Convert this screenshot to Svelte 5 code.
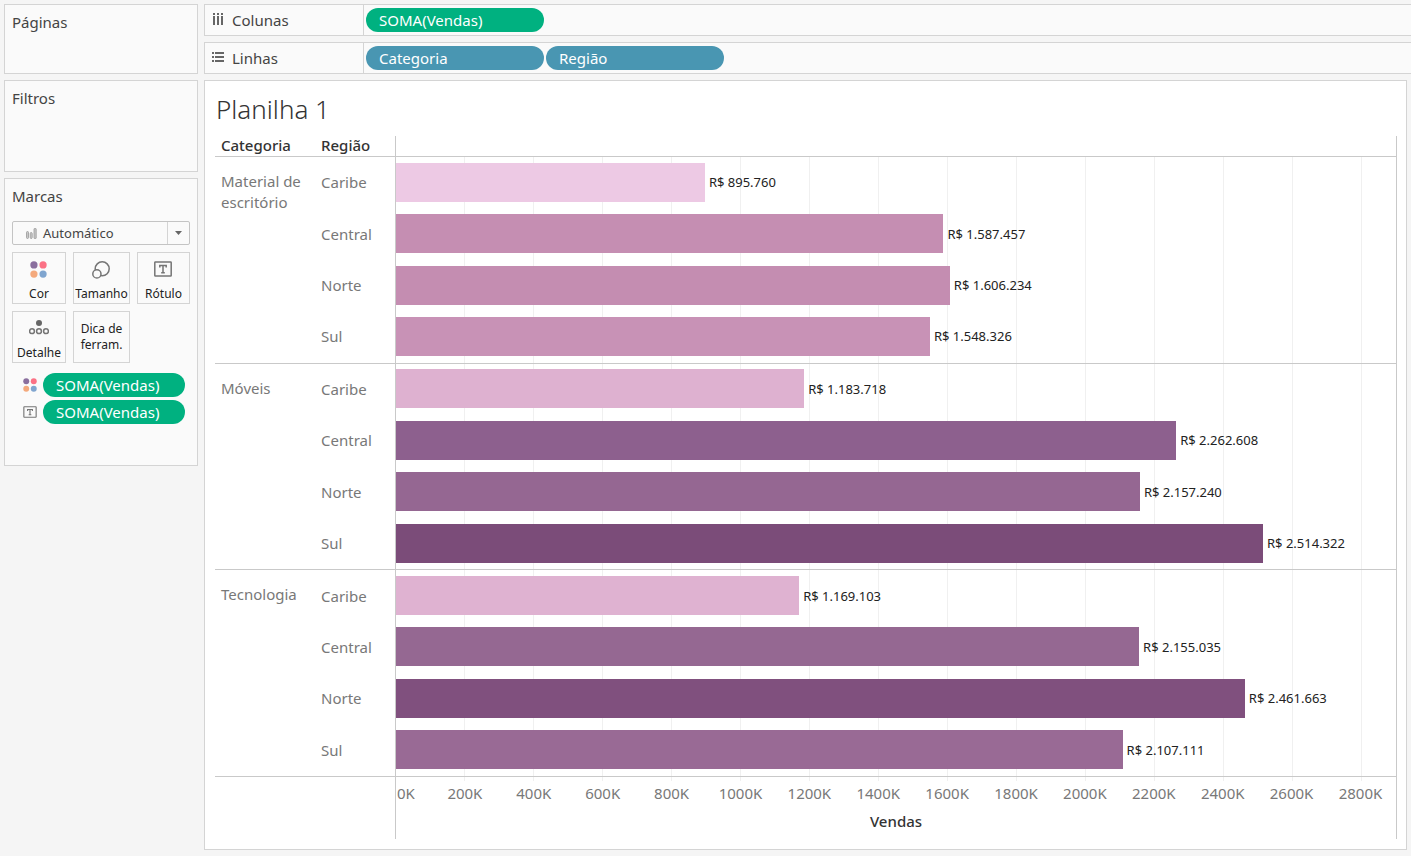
<script>
  const groups = [
    {
      name: 'Material de escritório',
      rows: [
        { region: 'Caribe', value: 895760, color: '#edc9e4' },
        { region: 'Central', value: 1587457, color: '#c58eb2' },
        { region: 'Norte', value: 1606234, color: '#c48db1' },
        { region: 'Sul', value: 1548326, color: '#c892b6' }
      ]
    },
    {
      name: 'Móveis',
      rows: [
        { region: 'Caribe', value: 1183718, color: '#deb1d0' },
        { region: 'Central', value: 2262608, color: '#8d608e' },
        { region: 'Norte', value: 2157240, color: '#956792' },
        { region: 'Sul', value: 2514322, color: '#7b4c79' }
      ]
    },
    {
      name: 'Tecnologia',
      rows: [
        { region: 'Caribe', value: 1169103, color: '#dfb2d1' },
        { region: 'Central', value: 2155035, color: '#956892' },
        { region: 'Norte', value: 2461663, color: '#80507e' },
        { region: 'Sul', value: 2107111, color: '#996a95' }
      ]
    }
  ];
  const max = 2900000;
  const ticks = Array.from({ length: 14 }, (_, i) => (i + 1) * 200);
  const money = (n) => 'R$ ' + String(n).replace(/\B(?=(\d{3})+$)/g, '.');
</script>

{#snippet dots(size)}
  <svg width={size} height={size} viewBox="0 0 16 16" aria-hidden="true">
    <circle cx="3.7" cy="3.7" r="3.4" fill="#8a6f9e" />
    <circle cx="12.3" cy="3.7" r="3.4" fill="#fb7185" />
    <circle cx="3.7" cy="12.3" r="3.4" fill="#f4a97c" />
    <circle cx="12.3" cy="12.3" r="3.4" fill="#80a5cf" />
  </svg>
{/snippet}

{#snippet label(w, h)}
  <svg width={w} height={h} viewBox="0 0 18 16" aria-hidden="true" fill="none" stroke="#757575">
    <rect x="0.8" y="1" width="16.4" height="14" rx="0.6" stroke-width="1.5" />
    <path d="M5.8 6.6V4.6h6.4v2M9 4.6v7M7.2 11.7h3.6" stroke-width="1.5" />
  </svg>
{/snippet}

<div class="app">
  <aside>
    <section class="panel pages"><h2>Páginas</h2></section>
    <section class="panel filters"><h2>Filtros</h2></section>
    <section class="panel marks">
      <h2>Marcas</h2>
      <button class="type" aria-haspopup="listbox">
        <svg width="11" height="11" viewBox="0 0 11 11" aria-hidden="true" fill="#c8c8c8" stroke="#999" stroke-width="0.8">
          <rect x="0.5" y="3.5" width="2" height="7" rx="1" />
          <rect x="4.2" y="4.5" width="2" height="6" rx="1" />
          <rect x="8" y="0.5" width="2.2" height="10" rx="0.6" />
        </svg>
        <span>Automático</span>
        <i><svg width="7" height="4" viewBox="0 0 7 4" aria-hidden="true"><path d="M0 0h7L3.5 4z" fill="#666" /></svg></i>
      </button>
      <div class="cards">
        <button>{@render dots(17)}<span>Cor</span></button>
        <button>
          <svg width="18" height="18" viewBox="0 0 18 18" aria-hidden="true" stroke="#757575" stroke-width="1.5">
            <circle cx="10.2" cy="7.8" r="7" fill="none" />
            <circle cx="4.9" cy="12.9" r="4.1" fill="#fafafa" />
          </svg>
          <span>Tamanho</span>
        </button>
        <button>{@render label(18, 16)}<span>Rótulo</span></button>
        <button>
          <svg width="20" height="15" viewBox="0 0 20 15" aria-hidden="true" fill="none" stroke="#757575" stroke-width="1.5">
            <circle cx="10" cy="3.1" r="3" fill="#666" stroke="none" />
            <circle cx="3" cy="11.2" r="2.4" />
            <circle cx="10" cy="11.2" r="2.4" />
            <circle cx="17" cy="11.2" r="2.4" />
          </svg>
          <span>Detalhe</span>
        </button>
        <button class="tip">Dica de<br />ferram.</button>
      </div>
      <div class="encodings">
        <div>{@render dots(14)}<button class="pill green">SOMA(Vendas)</button></div>
        <div>{@render label(14, 12)}<button class="pill green">SOMA(Vendas)</button></div>
      </div>
    </section>
  </aside>

  <main>
    <section class="shelf">
      <h2>
        <svg width="12" height="14" viewBox="0 0 12 14" aria-hidden="true" fill="#666">
          <path d="M1 0h2v2H1zM5 0h2v2H5zM9 0h2v2H9zM1 3h2v9H1zM5 3h2v9H5zM9 3h2v9H9z" />
        </svg>
        Colunas
      </h2>
      <button class="pill green">SOMA(Vendas)</button>
    </section>
    <section class="shelf">
      <h2>
        <svg width="12" height="14" viewBox="0 0 12 14" aria-hidden="true" fill="#666">
          <path d="M0 1h2v2H0zM0 5h2v2H0zM0 9h2v2H0zM3 1h9v2H3zM3 5h9v2H3zM3 9h9v2H3z" />
        </svg>
        Linhas
      </h2>
      <button class="pill blue">Categoria</button>
      <button class="pill blue">Região</button>
    </section>

    <section class="sheet">
      <h1>Planilha 1</h1>
      <div class="viz">
        <div class="head names"><b>Categoria</b><b>Região</b></div>
        <div class="head plot"></div>
        <div class="body">
          <div class="grid" aria-hidden="true">
            {#each ticks as t (t)}<i></i>{/each}
            <i class="half"></i>
          </div>
          <div class="groups">
            {#each groups as g (g.name)}
              <div class="group">
                <div class="cat">{g.name}</div>
                <div class="rows">
                  {#each g.rows as r (r.region)}
                    <div class="row">
                      <span class="region">{r.region}</span>
                      <div class="track">
                        <div class="bar" style="width: {(r.value / max) * 100}%; background: {r.color}"></div>
                        <span class="value">{money(r.value)}</span>
                      </div>
                    </div>
                  {/each}
                </div>
              </div>
            {/each}
          </div>
        </div>
        <div class="foot"></div>
        <div class="foot plot">
          <div class="ticks">
            <span class="zero">0K</span>
            {#each ticks as t (t)}<span>{t}K</span>{/each}
          </div>
          <b>Vendas</b>
        </div>
      </div>
    </section>
  </main>
</div>

<style>
  :global(body) {
    background: #f5f5f5;
  }
  .app {
    box-sizing: border-box;
    min-height: 100vh;
    display: grid;
    grid-template-columns: 194px minmax(0, 1fr);
    gap: 6px;
    padding: 4px 0 6px 4px;
    font: 15px/20px 'Noto Sans', sans-serif;
    color: #444;
  }
  .app * {
    box-sizing: border-box;
  }
  h1,
  h2 {
    margin: 0;
    font-weight: 400;
  }
  h2 {
    font-size: 15px;
    line-height: 20px;
  }
  button {
    font: inherit;
    color: inherit;
    padding: 0;
    margin: 0;
    cursor: pointer;
  }
  svg {
    display: block;
    flex: none;
  }
  aside,
  main {
    display: flex;
    flex-direction: column;
    gap: 6px;
    min-width: 0;
  }
  .panel {
    border: 1px solid #d4d4d4;
    background: #fafafa;
    padding: 7px;
  }
  .pages {
    min-height: 70px;
  }
  .filters {
    min-height: 92px;
  }
  .marks {
    min-height: 288px;
  }
  .type {
    display: flex;
    align-items: center;
    width: 100%;
    height: 24px;
    margin-top: 15px;
    border: 1px solid #c4c4c4;
    border-radius: 2px;
    background: #fafafa;
    padding-left: 13px;
    gap: 6px;
    font-size: 13px;
  }
  .type i {
    display: flex;
    align-items: center;
    justify-content: center;
    width: 22px;
    height: 100%;
    margin-left: auto;
    border-left: 1px solid #d4d4d4;
  }
  .cards {
    display: grid;
    grid-template-columns: 54fr 57fr 53fr;
    gap: 7px;
    margin-top: 7px;
  }
  .cards button {
    display: flex;
    flex-direction: column;
    align-items: center;
    justify-content: space-between;
    height: 52px;
    padding: 8px 0 1px;
    border: 1px solid #d4d4d4;
    background: #fafafa;
    font-size: 12px;
    line-height: 16px;
    color: #222;
  }
  .cards svg {
    margin-right: 1px;
  }
  .cards .tip {
    display: block;
    padding: 0;
  }
  .encodings {
    display: flex;
    flex-direction: column;
    gap: 3px;
    margin-top: 10px;
    padding: 0 5px 0 11px;
  }
  .encodings div {
    display: flex;
    align-items: center;
    gap: 6px;
  }
  .encodings .pill {
    flex: 1;
  }
  .pill {
    width: 178px;
    height: 24px;
    border: 0;
    border-radius: 12px;
    padding: 0 13px;
    text-align: left;
    color: #fff;
  }
  .green {
    background: #00b180;
  }
  .blue {
    background: #4996b2;
  }
  .shelf {
    display: flex;
    align-items: center;
    gap: 2px;
    height: 32px;
    border: 1px solid #d4d4d4;
    border-right: 0;
    background: #fafafa;
  }
  .shelf h2 {
    display: flex;
    align-items: center;
    gap: 8px;
    width: 159px;
    height: 100%;
    padding-left: 7px;
    border-right: 1px solid #d4d4d4;
  }
  .sheet {
    flex: 1;
    display: flex;
    flex-direction: column;
    margin-right: 4px;
    padding: 10px 9px 10px 10px;
    border: 1px solid #d4d4d4;
    background: #fff;
  }
  h1 {
    padding-left: 1px;
    font-size: 26px;
    line-height: 36px;
    font-weight: 300;
    color: #333;
    margin-bottom: 9px;
  }
  .viz {
    flex: 1;
    display: grid;
    grid-template-columns: 180px minmax(0, 1fr);
    grid-template-rows: 21px minmax(0, 1fr) 62px;
    color: #787878;
  }
  .viz b {
    font-weight: 500;
    color: #333;
  }
  .head {
    border-bottom: 1px solid #c9c9c9;
  }
  .names {
    display: grid;
    grid-template-columns: 100px 1fr;
    padding-left: 6px;
    line-height: 18px;
  }
  .plot {
    border-left: 1px solid #c9c9c9;
    border-right: 1px solid #c9c9c9;
  }
  .body {
    grid-column: 1 / -1;
    display: grid;
  }
  .grid,
  .groups {
    grid-area: 1 / 1;
  }
  .grid {
    display: flex;
    margin: 0 0 -4px 180px;
    border-left: 1px solid #c9c9c9;
    border-right: 1px solid #c9c9c9;
  }
  .grid i {
    flex: 2 0 0;
    border-right: 1px solid #f0f0f0;
  }
  .grid .half {
    flex: 1 0 0;
    border: 0;
  }
  .groups {
    display: grid;
    grid-template-rows: repeat(3, 1fr);
  }
  .group {
    display: grid;
    grid-template-columns: 106px minmax(0, 1fr);
    border-bottom: 1px solid #c9c9c9;
  }
  .cat {
    padding: 14px 10px 0 6px;
    line-height: 21px;
  }
  .rows {
    display: grid;
    grid-template-rows: repeat(4, 1fr);
  }
  .row {
    display: grid;
    grid-template-columns: 75px minmax(0, 1fr);
    align-items: center;
    padding-bottom: 1px;
  }
  .track {
    display: flex;
    align-items: center;
    gap: 4px;
    margin-right: 1px;
  }
  .bar {
    flex: none;
    height: 39px;
  }
  .value {
    white-space: nowrap;
    font-size: 13px;
    color: #222;
  }
  .foot.plot {
    padding-top: 6px;
    text-align: center;
  }
  .ticks {
    display: flex;
    margin: 0 1px 8px 0;
  }
  .ticks span {
    flex: 2 0 0;
    min-width: 0;
  }
  .ticks .zero {
    flex: 1 0 0;
    text-align: left;
    text-indent: 1px;
  }
</style>
